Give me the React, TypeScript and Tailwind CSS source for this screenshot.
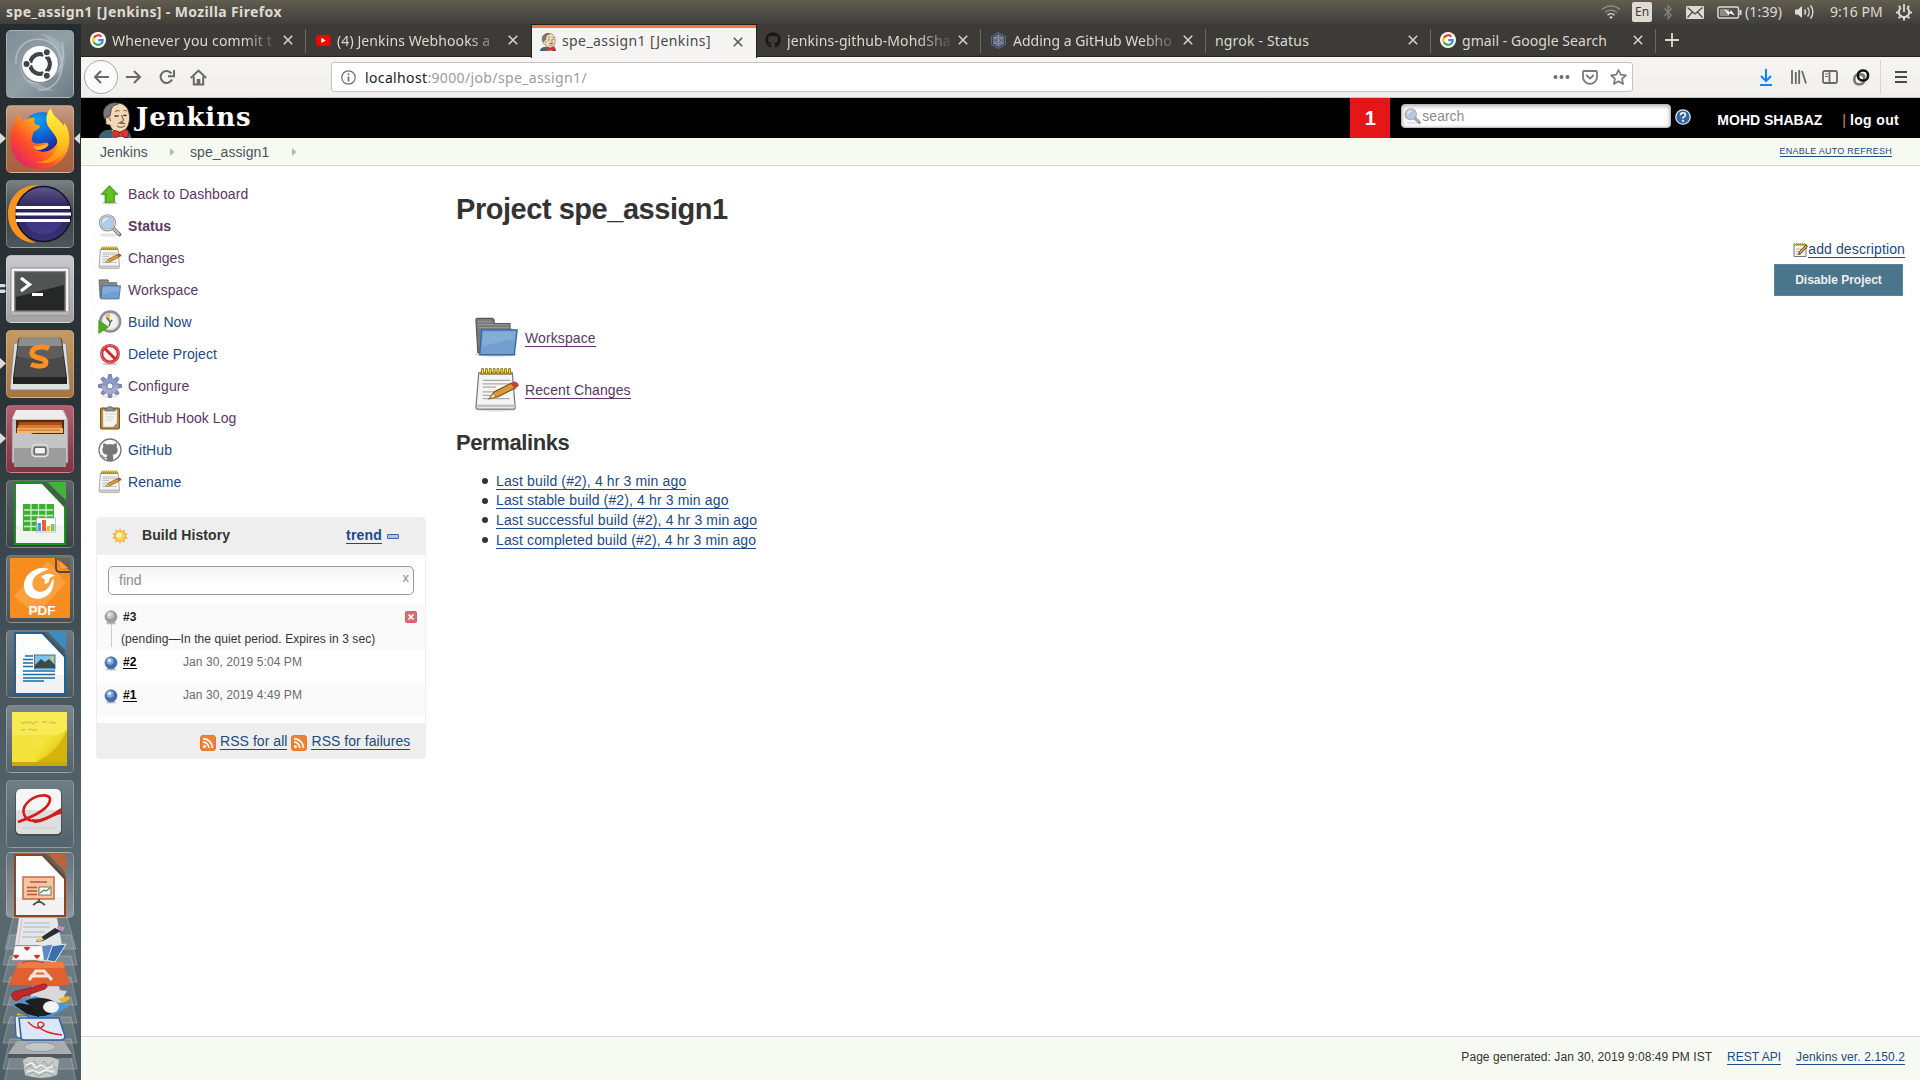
import React from 'react';
import type { ReactNode } from 'react';
import { FaGithub, FaBluetoothB } from 'react-icons/fa';

/* ---------- small shared drawings ---------- */

function GoogleG() {
  return (
    <svg width="16" height="16" viewBox="0 0 18 18" className="shrink-0">
      <circle cx="9" cy="9" r="9" fill="#fff" />
      <g fill="none" strokeWidth="2.5">
        <path d="M12.9 5.3A5.3 5.3 0 0 0 4.3 6.6" stroke="#ea4335" />
        <path d="M4.3 6.6a5.3 5.3 0 0 0 0 4.8" stroke="#fbbc05" />
        <path d="M4.3 11.4a5.3 5.3 0 0 0 8.2 1.7" stroke="#34a853" />
        <path d="M12.5 13.1A5.3 5.3 0 0 0 14.3 9.2H9.2" stroke="#4285f4" />
      </g>
    </svg>
  );
}

function YoutubeMark() {
  return (
    <svg width="16" height="16" viewBox="0 0 16 16" className="shrink-0">
      <rect x="1" y="3" width="14.5" height="11" rx="2.5" fill="#f00" />
      <path d="M6.3 5.8v5.2l4.400-2.600z" fill="#fff" />
    </svg>
  );
}

function Butler({ w, h }: { w: number; h: number }) {
  return (
    <svg width={w} height={h} viewBox="0 0 32 36" className="shrink-0">
      <path d="M0 36c0-4 3-7 8-8l8-1 10 1c4 1 6 4 6 8z" fill="#3f6478" />
      <path d="M13 28l6 3 5-4 1 9H14z" fill="#e9e9e9" />
      <path d="M7 20C4 8 10 1 18 1c8 0 13 6 12.500 16C30 25 26 30 20 30c-5 0-8-3-9-7-3 0-5-1-4-3z" fill="#f3d8b6" stroke="#3a2f28" strokeWidth=".8" />
      <path d="M6 18C1 9 7 1 16 .6c3 0 4 1 3 1.600-5 1-7 4-7 7 0 2-1 3-1 5-3 0-5 1-5 4z" fill="#7a787a" stroke="#231f20" strokeWidth=".6" />
      <path d="M8 16c2-1 3 0 3.500 3M16 9.500c1.500-1.200 3-1 4.500-.4M24.500 8.800c1.500-.6 2.500-.3 3.500.6M22.500 13c1 3 2.500 5 1.800 6s-1.800 1-2.800.6M18 24c3 2 6 1.500 8-.6" fill="none" stroke="#4a3d34" strokeWidth=".9" />
      <path d="M18 21.500c2.500-1.800 6-1.800 9 .5-3-.2-6 0-9-.5z" fill="#5e4a3c" />
      <path d="M15.500 13.500q2 1.500 4 0M24.500 13q1.500 1.300 3 0" fill="none" stroke="#231f20" strokeWidth="1.100" />
      <path d="M14 29c2-1 5 0 7 2 2-2 5-4 8-3 1 3 0 6-1 8l-6-2-7 2c-1-3-2-5-1-7z" fill="#e0352f" stroke="#5d1a18" strokeWidth=".7" />
      <circle cx="21.500" cy="32.500" r="1.800" fill="#ef4a45" stroke="#5d1a18" strokeWidth=".6" />
    </svg>
  );
}

function HexMark() {
  return (
    <svg width="17" height="17" viewBox="0 0 18 18" className="shrink-0" fill="none">
      <path d="M9 .8l7.300 4.100v8.200L9 17.200 1.700 13.100V4.900z" stroke="#5468a8" strokeWidth="1.200" />
      <path d="M9 3l5 3v6l-5 3-5-3V6z" fill="#59636e" stroke="#8f9cab" strokeWidth=".8" />
      <path d="M4 6l10 6M14 6L4 12M9 3v12M4 6h10M4 12h10" stroke="#a2aebb" strokeWidth=".6" />
    </svg>
  );
}

function CloseX({ dark }: { dark?: boolean }) {
  return (
    <svg width="10" height="10" viewBox="0 0 10 10" className="shrink-0" fill="none" stroke={dark ? '#5a5954' : '#d5d2c8'} strokeWidth="1.600">
      <path d="M.8.8l8.400 8.400M9.200.8L.8 9.200" />
    </svg>
  );
}

/* ---------- top panel ---------- */

function TopPanel() {
  return (
    <div className="flex h-6 items-center bg-linear-to-b from-[#615d50] via-[#504d47] to-[#403f3a] pl-1.5 text-[#dfdbd2]">
      <span className="text-[14px] leading-6 font-bold tracking-[0.38px] whitespace-nowrap">spe_assign1 [Jenkins] - Mozilla Firefox</span>
      <div className="ml-auto flex h-6 items-center">
        <svg width="20" height="16" viewBox="0 0 20 16" fill="none" strokeWidth="1.500">
          <path d="M1 5.500a13 13 0 0 1 18 0" stroke="#8e8b82" />
          <path d="M4 8.500a9 9 0 0 1 12 0" stroke="#8e8b82" />
          <path d="M6.500 11.200a5 5 0 0 1 7 0" stroke="#dfdbd2" />
          <path d="M8.300 13.200L10 15l1.700-1.800a2.400 2.400 0 0 0-3.400 0z" fill="#dfdbd2" />
        </svg>
        <span className="ml-[11px] flex h-5 w-5 items-center justify-center rounded-[2px] bg-[#dfdbd2] text-[12px] text-[#3c3b37]">En</span>
        <FaBluetoothB size={16} className="ml-2 text-[#85827a]" />
        <svg width="18" height="13" viewBox="0 0 18 13" className="ml-[10px]">
          <rect width="18" height="13" rx="1" fill="#dfdbd2" />
          <path d="M1.500 1.500L9 8l7.500-6.500M1.500 11.500L6.500 6M16.500 11.500l-5-5.500" fill="none" stroke="#4a4843" strokeWidth="1.200" />
        </svg>
        <svg width="25" height="13" viewBox="0 0 25 13" className="ml-[13px]">
          <rect x="1" y="1" width="20.500" height="11" rx="1.500" fill="none" stroke="#dfdbd2" strokeWidth="1.500" />
          <rect x="22.500" y="4" width="2" height="5" fill="#dfdbd2" />
          <rect x="3" y="3" width="9" height="7" fill="#8e8b82" />
          <path d="M7 3l6 3.200.8-2.200L18 9.500l-5.500-2.200-.8 1.900z" fill="#fff" />
        </svg>
        <span className="ml-[3px] w-[38px] text-[14px] leading-6 tracking-[0.14px]">(1:39)</span>
        <svg width="21" height="16" viewBox="0 0 21 16" className="ml-[11px]" fill="none" stroke="#dfdbd2" strokeWidth="1.400">
          <path d="M1 5.500h3l4-3.500v12l-4-3.500H1z" fill="#dfdbd2" stroke="none" />
          <path d="M10.500 5.500a4 4 0 0 1 0 5M13.500 3.500a7 7 0 0 1 0 9M16.500 1.500a10 10 0 0 1 0 13" />
        </svg>
        <span className="ml-[15px] w-[54px] text-[14px] leading-6 whitespace-nowrap">9:16 PM</span>
        <svg width="18" height="18" viewBox="0 0 18 18" className="mr-[7px] ml-[11px]" fill="none" stroke="#dfdbd2">
          <path d="M6 4.800a5.200 5.200 0 1 0 6 0" strokeWidth="2" />
          <path d="M9 1v8" strokeWidth="1.800" />
          <path d="M3.800 2.800l1.600 1.800M14.200 2.800l-1.600 1.800M1 9.500h2M15 9.500h2M3.500 15.200l1.500-1.500M14.500 15.200L13 13.700M9 15v2.500" strokeWidth="2" />
        </svg>
      </div>
    </div>
  );
}

/* ---------- launcher ---------- */

function Tile({ bg, last, arrow, both, children }: { bg: string; last?: boolean; arrow?: 'one' | 'two'; both?: boolean; children: ReactNode }) {
  return (
    <div className={`relative flex w-[81px] shrink-0 justify-center pr-[1px] ${last ? 'h-[62px]' : 'h-[75px]'}`}>
      {arrow === 'one' && (
        <svg width="6" height="11" viewBox="0 0 6 11" className="absolute top-[28px] left-0">
          <path d="M0 0l6 5.500L0 11z" fill="#dcdcdc" />
        </svg>
      )}
      {arrow === 'two' && (
        <svg width="6" height="11" viewBox="0 0 6 11" className="absolute top-[28px] left-0">
          <path d="M0 1h4.500L6 2.800 4.500 4.300H0zM0 6.500h4.500L6 8.200 4.500 10H0z" fill="#dcdcdc" />
        </svg>
      )}
      {both && (
        <svg width="6" height="11" viewBox="0 0 6 11" className="absolute top-[28px] right-[1px]">
          <path d="M6 0L0 5.500 6 11z" fill="#dcdcdc" />
        </svg>
      )}
      <div className={`w-[68px] overflow-hidden rounded-[5px] border border-white/25 ${last ? 'h-[66px]' : 'h-[68px]'} ${bg}`}>
        <svg width="66" height="66" viewBox="1 1 66 66">
          {children}
        </svg>
      </div>
    </div>
  );
}

function OfficeDoc({ dark, light }: { dark: string; light: string }) {
  return (
    <>
      <path d="M8 2h30l22 23v40H8z" fill={dark} />
      <path d="M10 4h26l22 23v36H10z" fill="#fdfdfd" />
      <path d="M10 45h48v18H10z" fill="#ececec" opacity=".7" />
      <path d="M40 2h20v18z" fill={light} />
      <path d="M36 3l23 25v-8L42 2h-6z" fill="#4a4a4a" opacity=".5" />
    </>
  );
}

function Launcher() {
  return (
    <div className="flex h-[1056px] w-[81px] shrink-0 flex-col overflow-hidden bg-[linear-gradient(180deg,#252c2f_0%,#2b3438_36%,#3b474d_50%,#4d5c64_68%,#5b6b72_80%,#4d5d64_100%)] pt-[6px]">
      <Tile bg="bg-linear-to-br from-[#7d8c94] via-[#93a1a7] to-[#6b7b83]">
        <path d="M10 34C8 8 38 2 50 18c14 18 2 44-18 42M56 12C64 40 38 62 22 50" fill="none" stroke="#c3cdd1" strokeWidth="1.500" opacity=".7" />
        <path d="M34 4c24 0 32 26 18 42 4-20-2-34-18-42zM14 30c-2 20 14 34 36 30-16-2-28-12-36-30z" fill="#b9c4c9" opacity=".45" />
        <circle cx="34" cy="35" r="18.500" fill="#4c5a60" opacity=".5" />
        <circle cx="34" cy="34" r="18" fill="#fff" />
        <circle cx="34" cy="34" r="9.800" fill="none" stroke="#3c4649" strokeWidth="4.200" />
        <path d="M34 34h-17M34 34l8-14M34 34l8 14" stroke="#fff" strokeWidth="2.200" />
        <circle cx="34" cy="34" r="7.600" fill="#fff" />
        <g fill="#3c4649" stroke="#fff" strokeWidth="1.400">
          <circle cx="20.500" cy="34" r="3.700" />
          <circle cx="40.800" cy="22.300" r="3.700" />
          <circle cx="40.800" cy="45.700" r="3.700" />
        </g>
      </Tile>

      <Tile bg="bg-linear-to-b from-[#c79d86] via-[#ad6d4c] to-[#a9603d]" arrow="one" both>
        <defs>
          <linearGradient id="ffBody" x1="1" y1="0" x2="0" y2="1">
            <stop offset="0" stopColor="#ffe94f" />
            <stop offset=".35" stopColor="#ffa81f" />
            <stop offset=".65" stopColor="#ff4b26" />
            <stop offset="1" stopColor="#d0128c" />
          </linearGradient>
          <radialGradient id="ffGlobe" cx=".4" cy=".2" r=".9">
            <stop offset="0" stopColor="#12a0f0" />
            <stop offset=".6" stopColor="#1150c8" />
            <stop offset="1" stopColor="#2b1470" />
          </radialGradient>
          <linearGradient id="ffTail" x1="0" y1="0" x2="0" y2="1">
            <stop offset="0" stopColor="#fff44f" />
            <stop offset=".6" stopColor="#ffc61f" />
            <stop offset="1" stopColor="#ff8a16" />
          </linearGradient>
        </defs>
        <circle cx="36" cy="27" r="20" fill="url(#ffGlobe)" />
        <path d="M10 13c1-2 2-4 3-4l3 8c3-3 8-5 13-4-1 2-1 4 0 6 1 1 4 1 5 2 0 3-5 4-7 7 0 3-2 5-1 8 4 5 11 1 16 2 1 3-4 7-11 7 9 5 20-1 22-13 2-9-5-16-9-21 6 1 16 9 19 19 3 20-12 34-29 34C15 64 2 50 5 32c0-7 3-14 5-19z" fill="url(#ffBody)" />
        <path d="M45 3c-5 5-6 12-3 18 4 7 13 12 8 24-4 9-13 12-20 12 18 5 33-8 33-28-1-6-3-9-5-11 0 2 0 3 0 5C55 14 46 12 45 3z" fill="url(#ffTail)" />
        <path d="M27 41c5 2 10-2 15-2 2 1-3 5-8 6-4 0-6-2-7-4z" fill="#ffb52b" />
      </Tile>

      <Tile bg="bg-linear-to-b from-[#7b8082] via-[#3d4548] to-[#4d5659]">
        <defs>
          <linearGradient id="ecl" x1="0" y1="0" x2="0" y2="1">
            <stop offset="0" stopColor="#5c588e" />
            <stop offset=".4" stopColor="#2c2255" />
            <stop offset="1" stopColor="#3b3278" />
          </linearGradient>
        </defs>
        <path d="M33 5C15 4 2 17 2 34s12 29 28 29C18 58 11 47 11 34S19 9 33 5z" fill="#f7941e" />
        <circle cx="37.500" cy="34" r="27.500" fill="url(#ecl)" stroke="#151024" strokeWidth="1.500" />
        <path d="M19 42a20 20 0 0 0 37 0z" fill="#4b439a" opacity=".6" />
        <path d="M10 27.500h54M9.500 34h55.500M10 40.500h54" stroke="#fff" strokeWidth="3" />
      </Tile>

      <Tile bg="bg-linear-to-b from-[#c9c9cd] to-[#a3a3a6]" arrow="two">
        <path d="M5 13h58v47H5z" fill="#f2f2f2" stroke="#8d8d8d" />
        <path d="M5 56h58v4H5z" fill="#b5b5b5" />
        <path d="M8 16h52v41H8z" fill="#8b8b8b" />
        <path d="M9.500 17.500h49v38h-49z" fill="#262827" />
        <path d="M10 18h48v12L10 42z" fill="#505452" />
        <path d="M15 23l8.500 6.500L15 36" fill="none" stroke="#fff" strokeWidth="3.200" />
        <path d="M26 39.500h11" stroke="#fff" strokeWidth="2.800" />
      </Tile>

      <Tile bg="bg-linear-to-b from-[#c59a65] to-[#a8743c]" arrow="one">
        <path d="M8 13L4 58q0 2 2 2h56q2 0 2-2l-4-45z" fill="#dedede" stroke="#8a8a8a" />
        <path d="M12 10L7 48v6h54v-6L56 10q-1-3-4-3H16q-3 0-4 3z" fill="#232323" />
        <path d="M13 9L8 47h52L55 9q-1-2-3-2H16q-2 0-3 2z" fill="#4a4a4a" />
        <path d="M13 9q1-2 3-2h36q2 0 3 2l1 7H12z" fill="#8d8d8d" />
        <path d="M12 16h44l2 10q-22 7-48 0z" fill="#6a6a6a" opacity=".6" />
        <path d="M43 18.500C38 16 26 16 26 23c0 6 14 4 14 9.500 0 5-10 4-15 2" fill="none" stroke="#ff8f1f" strokeWidth="5" />
      </Tile>

      <Tile bg="bg-linear-to-b from-[#b5606f] to-[#83303f]" arrow="one">
        <path d="M12 5h46l4 10v43H6V15z" fill="#c4c4c4" stroke="#777" strokeWidth=".6" />
        <path d="M10 5h46l5 9H6z" fill="#ededed" />
        <path d="M10 15h48v16H10z" fill="#4b2c18" />
        <path d="M13 17h43v3H13z" fill="#a84e1a" />
        <path d="M12 20h44v3H12z" fill="#dd7a2c" />
        <path d="M11 23h46v5H11z" fill="#f2b46b" />
        <path d="M12 25h42" stroke="#c46b22" strokeWidth="1" />
        <path d="M8 28h16l3 1h33v33H8z" fill="#9c9c9c" />
        <path d="M8 28h16l3 1h33v14H8z" fill="#c4c4c4" />
        <rect x="26" y="40" width="16" height="11.500" rx="3.500" fill="#8f8f8f" stroke="#e5e5e5" strokeWidth="1.500" />
        <rect x="28.500" y="42.500" width="11" height="6.500" rx="1" fill="#f4f4f4" stroke="#666" strokeWidth="1.200" />
      </Tile>

      <Tile bg="bg-linear-to-b from-[#5d6467] to-[#3a4447]">
        <OfficeDoc dark="#18921a" light="#43b13e" />
        <rect x="17" y="24" width="31" height="27" fill="#3fae35" />
        <path d="M18 30h29M18 35.500h29M18 41h29M18 46.500h29M25 24v27M32.500 24v27M40 24v27" stroke="#c9f0c2" strokeWidth="1.300" />
        <rect x="30.500" y="38" width="19" height="14" fill="#fff" stroke="#999" strokeWidth=".6" />
        <path d="M31.500 43h3.500v8h-3.500z" fill="#4d96d9" />
        <path d="M36 40h4v11h-4z" fill="#e06437" />
        <path d="M40.700 46h3.600v5h-3.600z" fill="#f1b52c" />
        <path d="M45 44h3.600v7H45z" fill="#7bc963" />
      </Tile>

      <Tile bg="bg-linear-to-b from-[#6b7275] to-[#46525a]">
        <rect x="4" y="3" width="60" height="60" fill="#f78d1e" />
        <path d="M8 41l34-35 18 22-30 32z" fill="#ffb768" opacity=".45" />
        <path d="M50 3h14v13z" fill="#6b6255" />
        <path d="M50 3v10q0 4 4 4h10" fill="none" stroke="#4b4a48" strokeWidth="1.800" />
        <path d="M54 6v7h8z" fill="#ff9e3d" />
        <path d="M43 14C31 10 17 19 18 32c1 13 20 17 28 3 2-5 2-9 1-12-2 6-5 13-12 14-7 0-10-6-8-12 2-5 8-8 16-11z" fill="#fff" />
        <path d="M35 22c5-4 10-4 14-1-3 0-5 1-6 4 1 2-3 5-5 3 2-2 1-4-3-6z" fill="#fff" />
        <text x="36" y="59.500" textAnchor="middle" fontFamily="Liberation Sans" fontWeight="bold" fontSize="13.500" fill="#fff">PDF</text>
      </Tile>

      <Tile bg="bg-linear-to-b from-[#6d777d] to-[#4b5961]">
        <OfficeDoc dark="#1a6496" light="#3b8cc0" />
        <path d="M19 26h8M17 29.500h10M17 33h10M17 36.500h10M17 41h32M17 44.500h32M17 48h32M17 51h21" stroke="#1a6ca5" strokeWidth="1.500" />
        <rect x="28.500" y="25" width="20.500" height="14" fill="#7ec3ee" stroke="#38566b" strokeWidth=".8" />
        <path d="M29 35l6-6 4 3 4-3 6 6v3H29z" fill="#3e4a43" />
        <circle cx="46" cy="28" r="1.800" fill="#f4c83a" />
      </Tile>

      <Tile bg="bg-linear-to-b from-[#7b8489] to-[#56636a]">
        <defs>
          <linearGradient id="noteCurl" x1="0" y1="0" x2="1" y2="1">
            <stop offset="0" stopColor="#f9ee60" />
            <stop offset=".45" stopColor="#f1dd2c" />
            <stop offset="1" stopColor="#cbab06" />
          </linearGradient>
        </defs>
        <path d="M6 7h55v54H6z" fill="#f8ea52" />
        <path d="M6 30h55v28H6z" fill="#f2dc30" opacity=".6" />
        <path d="M6 57h55v4H6z" fill="#c9a90f" />
        <path d="M61 25L30 57h31z" fill="#d4b50c" />
        <path d="M30 57V40c0-4 3-6 7-7 10-1 17-3 24-9C57 37 46 50 30 57z" fill="url(#noteCurl)" />
        <path d="M15 18q1-2 2 0t2-.5 2 .5h2q2-2 3 0t3-.5 3 .3M36 17h5M43 18q1-2 3-.5t4 0M15 25h4M22 25q2-2 4 0h5" fill="none" stroke="#a69c4a" strokeWidth=".7" />
      </Tile>

      <Tile bg="bg-linear-to-b from-[#6f7c83] to-[#53636b]">
        <rect x="9" y="10" width="47" height="46" rx="5" fill="#39444a" opacity=".7" />
        <rect x="10" y="9" width="45" height="45" rx="5" fill="#f6f6f6" />
        <path d="M10 30h45v19q0 5-5 5H15q-5 0-5-5z" fill="#dedede" />
        <path d="M17 48h32" stroke="#c5c5c5" strokeWidth=".8" />
        <path d="M12 42C26 37 43 29 44 20 45 13 29 14 21 23c-7 8-3 18 8 18 10 0 17-6 26-10" fill="none" stroke="#d61b1b" strokeWidth="2.600" />
        <path d="M26 39c10 3 19-5 29-11v6c-10 2-17 9-27 9z" fill="#d61b1b" />
      </Tile>

      <Tile bg="mt-[-3px] bg-linear-to-b from-[#69757b] to-[#8c979c]" last>
        <OfficeDoc dark="#8e441f" light="#b8653b" />
        <rect x="17" y="25" width="31" height="22" fill="#f7c5a4" stroke="#c86b3c" strokeWidth="1.500" />
        <path d="M24 30h17M21 35.500h10M21 39h10M21 42.500h10" stroke="#b85a2e" strokeWidth="1.600" />
        <rect x="33" y="35" width="12" height="8" fill="#fff" stroke="#555" strokeWidth=".8" />
        <path d="M34 41l4-3 2 1 4-3" fill="none" stroke="#3a9e3e" strokeWidth="1.300" />
        <path d="M33 47v3M33 49l-6 4M33 49l6 4" stroke="#555" strokeWidth="2" />
      </Tile>
      <FoldedIcons />
    </div>
  );
}

function FoldedIcons() {
  return (
    <svg width="81" height="166" viewBox="0 0 81 166" className="relative shrink-0">
      <g fill="#c7d2d6" fillOpacity=".2" stroke="#dfe7ea" strokeOpacity=".3" strokeWidth="1">
        <path d="M13 0h54l9 32H5z" />
        <path d="M10 18h61l6 30H3z" />
        <path d="M10 39h61l6 26H3z" />
        <path d="M10 60h61l6 28H3z" />
        <path d="M10 80h61l6 26H3z" />
        <path d="M10 100h61l6 26H3z" />
        <path d="M10 122h61l6 30H3z" />
        <path d="M10 140h61l6 30H3z" />
      </g>
      {/* note page and pencil */}
      <path d="M19 1h38l5 27H15z" fill="#e3e7ea" />
      <path d="M24 6h25M23 10h27M23 15h22M22 20h20" stroke="#aab4bd" strokeWidth="1" />
      <path d="M22 2l-4 26" stroke="#e6a6a6" strokeWidth=".8" />
      <path d="M37 23l18-12 6 3-18 10-7 1z" fill="#2d2d2d" />
      <path d="M41 19l-5 6 8-2z" fill="#f0d36a" />
      <path d="M57 9l8 1-2 4-5-1z" fill="#c98bc4" />
      {/* playing cards */}
      <path d="M50 29l16-2-11 18-10-2z" fill="#3c6fae" stroke="#e5ecf5" />
      <path d="M39 29l14-2-6 17-10-1z" fill="#5b8ac4" stroke="#e5ecf5" />
      <path d="M15 29h27l2 14H12z" fill="#fafafa" stroke="#bbb" strokeWidth=".5" />
      <path d="M27 34l-3-3q0-2 3-1 3-1 3 1zM16 42l-3-3q1-2 3-1 3-1 3 1zM37 42l-3-3q1-2 3-1 3-1 3 1z" fill="#d42a2a" />
      {/* software centre bag */}
      <path d="M18 45h45l7 23H9z" fill="#e0602f" />
      <path d="M18 45h45l2 6H17z" fill="#ef7b46" />
      <path d="M22 46q10-4 22 0" fill="none" stroke="#c84a1e" />
      <path d="M29 63l7-9h8l8 9M30 59h20" fill="none" stroke="#fbe4da" strokeWidth="3" />
      {/* gear and wrench */}
      <path d="M32 69h27l1 4 7 1-3 5 3 5-7 2-2 4H34l-4-5z" fill="#d9d9d9" stroke="#9b9b9b" strokeWidth=".6" />
      <path d="M12 80c-1-5 4-6 10-7l22-6c4 0 4 3 1 5L22 80c-3 4-8 5-10 0z" fill="#c0282d" stroke="#7c1519" strokeWidth=".7" />
      {/* diving bird */}
      <path d="M11 88l24-9 35 10-29 16z" fill="#4c97de" />
      <path d="M14 88c6-4 12 0 17 0l13 4-5 8-12-3z" fill="#1b1b1b" />
      <path d="M25 84c6-3 16-4 23-2 10 2 11 10 4 14-6 4-13 4-16 1-4-4 0-5-4-7z" fill="#1f1f1f" />
      <ellipse cx="51" cy="90" rx="8" ry="6" fill="#f2f2f2" />
      <path d="M17 96l12 4-3 3-9-3zM58 82l10-3 2 3-7 4z" fill="#e6b822" />
      {/* document stack with a red curve */}
      <path d="M15 101q0-2 3-2h10l3 22H20q-4 0-4-3z" fill="#e6eef8" stroke="#2f62a8" strokeWidth="1.200" />
      <path d="M19 101h40l6 18q0 4-4 4H24q-3 0-3-3z" fill="#dbe7f6" stroke="#2f62a8" strokeWidth="1.600" />
      <path d="M28 105c8 8 13 7 16 3 0-4-8-4-6 1 5 6 14 8 24 9" fill="none" stroke="#dd2222" strokeWidth="1.400" />
      {/* disk */}
      <path d="M17 124h47l8 13v4H8v-4z" fill="#a9adaf" />
      <ellipse cx="40" cy="130" rx="16" ry="4.500" fill="#c2c6c8" stroke="#8f9394" strokeWidth=".8" />
      <path d="M8 137h64v4H8z" fill="#54585a" />
      {/* shredder paper */}
      <path d="M23 143l5-3h23l8 3-2 15q-16 6-32 0z" fill="#c3cac7" />
      <path d="M25 145l5 4 4-5 5 6 5-6 4 5 6-5M25 152l5-3 5 4 6-4 6 4 6-4 4 3M27 158l6-3 6 4 7-4 8 3" fill="none" stroke="#9aa39f" strokeWidth="1" />
      <path d="M26 148l6-2 4 5 5-3 6 4 6-3M27 155l6-2 6 3 7-3 8 2" fill="none" stroke="#f2f4f3" strokeWidth="1.500" />
    </svg>
  );
}

/* ---------- browser chrome ---------- */

function Tab({ icon, label, tracking, active, sep, fade }: { icon?: ReactNode; label: string; tracking: string; active?: boolean; sep?: boolean; fade?: boolean }) {
  if (active) {
    return (
      <div className="z-10 -mr-px flex h-[34px] w-[226px] shrink-0 items-center border-x border-t border-[#23221f] bg-[#f5f4f2] pr-[13px] pl-2 shadow-[inset_0_3px_0_#f07746]">
        {icon}
        <span className={`ml-[6px] flex-1 pb-px text-[14px] leading-8 whitespace-nowrap text-[#4a4a48] ${tracking}`}>{label}</span>
        <CloseX dark />
      </div>
    );
  }
  return (
    <div className="relative flex h-[33px] w-[225px] shrink-0 items-center border-b border-[#23221f] pr-[13px] pl-[9px]">
      {icon && <span className="mr-1.5 flex">{icon}</span>}
      <span className={`mr-[3px] min-w-0 flex-1 pt-px text-[14px] leading-8 whitespace-nowrap text-[#dcd9cf] ${tracking} ${fade ? 'mask-r-from-78% mask-r-to-100%' : ''}`}>{label}</span>
      <CloseX />
      {sep && <span className="absolute top-[5px] right-0 h-6 w-px bg-[#6c6a63]" />}
    </div>
  );
}

function TabStrip() {
  return (
    <div className="flex h-[33px] bg-[#3c3b37] shadow-[inset_0_-1px_0_#23221f]">
      <Tab icon={<GoogleG />} label="Whenever you commit t" tracking="tracking-[0.15px]" sep fade />
      <Tab icon={<YoutubeMark />} label="(4) Jenkins Webhooks a" tracking="tracking-[0.1px]" fade />
      <Tab icon={<Butler w={16} h={18} />} label="spe_assign1 [Jenkins]" tracking="tracking-[0.4px]" active />
      <Tab icon={<FaGithub size={16} color="#191717" />} label="jenkins-github-MohdSha" tracking="tracking-[0.1px]" sep fade />
      <Tab icon={<HexMark />} label="Adding a GitHub Webho" tracking="tracking-[0px]" sep fade />
      <Tab label="ngrok - Status" tracking="tracking-[0.18px]" sep />
      <Tab icon={<GoogleG />} label="gmail - Google Search" tracking="tracking-[0.06px]" sep />
      <svg width="14" height="14" viewBox="0 0 14 14" className="mt-[9px] ml-[9px]" stroke="#dcd9cf" strokeWidth="1.800">
        <path d="M7 0v14M0 7h14" />
      </svg>
    </div>
  );
}

function Toolbar() {
  return (
    <div className="flex h-[41px] items-center border-b border-[#c4c3c0] bg-linear-to-b from-[#f6f5f4] to-[#f0efed]">
      <div className="ml-[3px] flex h-[34px] w-[34px] items-center justify-center rounded-full border border-[#a9a8a5] bg-[#fbfbfb]">
        <svg width="16" height="14" viewBox="0 0 16 14" fill="none" stroke="#6a6966" strokeWidth="2">
          <path d="M16 7H2M8 1L2 7l6 6" />
        </svg>
      </div>
      <svg width="16" height="14" viewBox="0 0 16 14" className="ml-2" fill="none" stroke="#6a6966" strokeWidth="2">
        <path d="M0 7h14M8 1l6 6-6 6" />
      </svg>
      <svg width="16" height="16" viewBox="0 0 16 16" className="ml-[17px]" fill="none" stroke="#6a6966" strokeWidth="2">
        <path d="M13 10.500A6 6 0 1 1 12.500 4.500" />
        <path d="M15 1v6.200H9" />
      </svg>
      <svg width="17" height="17" viewBox="0 0 17 17" className="ml-[15px]" fill="none" stroke="#6a6966" strokeWidth="2">
        <path d="M.8 9L8.500 1.600 16.200 9" />
        <path d="M3.800 7.500V15.500h9.400V7.500" />
        <path d="M8.500 15.500V10" strokeWidth="3.600" />
      </svg>

      <div className="ml-[124px] flex h-[30px] w-[1302px] items-center rounded-[3px] border border-[#c5c4c0] bg-white">
        <svg width="15" height="15" viewBox="0 0 15 15" className="ml-[9px]" fill="none" stroke="#6d6d6d" strokeWidth="1.200">
          <circle cx="7.500" cy="7.500" r="6.700" />
          <path d="M7.500 6.500v5M7.500 3.500v1.800" strokeWidth="1.700" />
        </svg>
        <span className="ml-[9px] pt-px text-[14px] leading-7 tracking-[0.36px] text-[#9b9b9b]">
          <span className="text-[#222]">localhost</span>:9000/job/spe_assign1/
        </span>
        <svg width="17" height="6" viewBox="0 0 17 6" className="ml-auto" fill="#6d6d6d">
          <circle cx="2.500" cy="3" r="2" />
          <circle cx="8.500" cy="3" r="2" />
          <circle cx="14.500" cy="3" r="2" />
        </svg>
        <svg width="16" height="15" viewBox="0 0 16 15" className="ml-3" fill="none" stroke="#7a7a7a" strokeWidth="1.800" strokeLinejoin="round" strokeLinecap="round">
          <path d="M1 2q0-1 1-1h12q1 0 1 1v5a7 6.800 0 0 1-14 0z" />
          <path d="M4.800 5.500L8 8.700l3.200-3.200" />
        </svg>
        <svg width="17" height="16" viewBox="0 0 17 16" className="mr-[5px] ml-3" fill="none" stroke="#7a7a7a" strokeWidth="1.700" strokeLinejoin="round">
          <path d="M8.500 1l2.200 4.700 5.200.6-3.900 3.500 1.100 5.100-4.600-2.600-4.600 2.600L5 9.800 1.100 6.300l5.200-.6z" />
        </svg>
      </div>

      <svg width="14" height="17" viewBox="0 0 14 17" className="ml-[126px]" fill="none" stroke="#0a84ff" strokeWidth="2">
        <path d="M7 0v12M2 7l5 5 5-5M1 16h12" />
      </svg>
      <svg width="16" height="14" viewBox="0 0 16 14" className="ml-[18px]" fill="none" stroke="#6a6966" strokeWidth="1.800">
        <path d="M1 0v14M4.800 2v12M8.200 0v14M11 1l4 12.500" />
      </svg>
      <svg width="16" height="14" viewBox="0 0 16 14" className="ml-[15px]" fill="none" stroke="#6a6966" strokeWidth="1.800">
        <rect x="1" y="1" width="14" height="12" rx="1.500" />
        <path d="M7.500 1v12" />
        <path d="M3 4h3M3 6.500h3" strokeWidth="1" />
      </svg>
      <svg width="18" height="17" viewBox="0 0 18 17" className="ml-[14px]" fill="none" strokeWidth="2.600">
        <rect x="2.300" y="5.300" width="10" height="10" rx="4.500" stroke="#777" />
        <rect x="6" y="1.500" width="10" height="10" rx="4.500" stroke="#111" />
        <path d="M7 5.300h1.500q3.800 0 3.800 3.500" stroke="#777" />
      </svg>
      <span className="ml-[10px] h-[34px] w-px bg-[#d5d4d1]" />
      <svg width="12" height="12" viewBox="0 0 12 12" className="ml-[14px]" stroke="#4a4a48" strokeWidth="2">
        <path d="M0 1h12M0 6h12M0 11h12" />
      </svg>
    </div>
  );
}

/* ---------- page header ---------- */

function Lens({ size, className }: { size: number; className?: string }) {
  return (
    <svg width={size} height={size} viewBox="0 0 24 24" className={`shrink-0 ${className ?? ''}`}>
      <ellipse cx="11" cy="21" rx="9" ry="1.800" fill="#d8d8d8" opacity=".7" />
      <path d="M15 14l6.500 6.500" stroke="#6e6e6e" strokeWidth="3.800" strokeLinecap="round" />
      <path d="M15.500 14.500l5.500 5.500" stroke="#c6c6c6" strokeWidth="1.800" strokeLinecap="round" />
      <circle cx="9.500" cy="8.800" r="7.500" fill="#aecbed" stroke="#8f8f8f" strokeWidth="2.200" />
      <circle cx="9.500" cy="8.800" r="7.200" fill="none" stroke="#e8e8e8" strokeWidth="1" />
      <path d="M5 8.500q1-4 5-4.200" fill="none" stroke="#e8f2fd" strokeWidth="1.800" />
    </svg>
  );
}

function JenkinsHeader() {
  return (
    <div className="flex h-10 bg-black text-white">
      <div className="flex w-[180px] pl-[18px]">
        <span className="mt-1">
          <Butler w={32} h={36} />
        </span>
        <span className="ml-[5px] font-['DejaVu_Serif'] text-[26px] leading-[38px] font-bold tracking-[0.9px]">Jenkins</span>
      </div>
      <div className="ml-auto flex h-10 w-10 items-center justify-center bg-[#e31717] text-[20px] font-bold">1</div>
      <div className="mt-1.5 ml-[11px] flex h-6 w-[270px] items-center rounded-[4px] border border-[#bbb] bg-white pl-0.5 text-[14px] text-[#8b8b8b] shadow-[inset_0_1px_4px_#aaa]">
        <Lens size={17} />
        <span className="ml-px leading-5">search</span>
      </div>
      <svg width="16" height="16" viewBox="0 0 16 16" className="mt-[11px] ml-1">
        <circle cx="8" cy="8" r="7.200" fill="#3465a4" stroke="#dbe6f3" strokeWidth="1.300" />
        <path d="M5.500 6.200Q5.700 3.800 8 3.800t2.400 2.100Q10.400 7.300 8 8.600v1" fill="none" stroke="#fff" strokeWidth="1.600" />
        <circle cx="8" cy="11.800" r="1.100" fill="#fff" />
      </svg>
      <span className="mt-[11px] ml-[26px] w-[106px] text-[14px] leading-[22px] font-bold whitespace-nowrap">MOHD SHABAZ</span>
      <span className="mt-[11px] ml-[19px] text-[14px] leading-[22px] text-[#e08a5a]">|</span>
      <span className="mt-[11px] mr-[20px] ml-1 w-[50px] text-[14px] leading-[22px] font-bold tracking-[0.34px] whitespace-nowrap">log out</span>
    </div>
  );
}

function Chevron() {
  return (
    <svg width="5" height="8" viewBox="0 0 5 8">
      <path d="M0 0l4.500 4L0 8z" fill="#b5b8b3" />
    </svg>
  );
}

function Breadcrumbs() {
  return (
    <div className="flex h-7 items-center border-b border-[#d3d7cf] bg-[#f6faf2] pt-px pl-[19px] text-[14px] tracking-[0.06px] text-[#4d545d]">
      <span className="w-[70px]">Jenkins</span>
      <Chevron />
      <span className="ml-[15px] w-[102px]">spe_assign1</span>
      <Chevron />
      <span className="mr-7 ml-auto border-b border-[#204a87] text-[9px] leading-[9px] tracking-[0.24px] text-[#204a87]">ENABLE AUTO REFRESH</span>
    </div>
  );
}

/* ---------- side panel icons ---------- */

function Notepad({ size }: { size: number }) {
  return (
    <svg width={size} height={size} viewBox="0 0 48 48" className="shrink-0">
      <ellipse cx="23" cy="44.500" rx="20" ry="2" fill="#bbb" opacity=".5" />
      <path d="M5 6h35l3 36q0 2-2 2H4q-2 0-2-2z" fill="#f4f4f2" stroke="#77797a" strokeWidth="1.300" />
      <path d="M3 39h40v3H3z" fill="#c1c1c1" />
      <path d="M6 5h34v3H6z" fill="#8a8a80" />
      <path d="M9 14h29M9 17.500h29M9 21h14M9 26h24M9 29.500h18M9 33h28" stroke="#ababab" strokeWidth="1.300" />
      <path d="M9 2.500v4M13 2.500v4M17 2.500v4M21 2.500v4M25 2.500v4M29 2.500v4M33 2.500v4M37 2.500v4" stroke="#8a6d00" strokeWidth="3" strokeLinecap="round" />
      <path d="M9 2.500v4M13 2.500v4M17 2.500v4M21 2.500v4M25 2.500v4M29 2.500v4M33 2.500v4M37 2.500v4" stroke="#edd430" strokeWidth="1.400" strokeLinecap="round" />
      <path d="M16 33l5-7 18-9 4 5-18 9z" fill="#d99a37" stroke="#7a4e10" strokeWidth="1.200" />
      <path d="M16 33l4-5.500 3 4z" fill="#f5dfb5" stroke="#7a4e10" strokeWidth=".6" />
      <path d="M39 17l3-1.500q4 .5 4.500 4L43 22z" fill="#e0352b" stroke="#8d5a54" strokeWidth=".8" />
    </svg>
  );
}

function NotepadSmall() {
  return (
    <svg width="15" height="16" viewBox="0 0 15 16" className="shrink-0">
      <path d="M1 2.500h12v12H1z" fill="#f3f3f1" stroke="#777" />
      <path d="M3 7h7M3 9.500h5M3 12h4" stroke="#b5b5b5" />
      <path d="M1.500 1v3M3.500 1v3M5.500 1v3M7.500 1v3M9.500 1v3M11.500 1v3" stroke="#c9a400" strokeWidth="1.400" />
      <path d="M5.500 12.500l1-3L13 2.800l1.600 1.500L8 11.500z" fill="#d9a548" stroke="#4e3a16" strokeWidth=".9" />
    </svg>
  );
}

function Folder({ size }: { size: number }) {
  return (
    <svg width={size} height={size} viewBox="0 0 48 48" className="shrink-0">
      <ellipse cx="23" cy="41" rx="22" ry="2.500" fill="#bbb" opacity=".6" />
      <path d="M2 5q0-1.500 1.500-1.500h16L21 5v4h16.500v6h2v24H4z" fill="#7b7b7b" stroke="#555" strokeWidth="1.200" />
      <path d="M4 7h15M4 10h33M5 13h32" stroke="#a2a2a2" strokeWidth=".8" />
      <path d="M8 15.500h37l-3 26H6z" fill="#729fcf" stroke="#3566a5" strokeWidth="1.400" />
      <path d="M9.500 17.500h34l-1 8q-14 1-34 8z" fill="#8fb5dd" opacity=".6" />
    </svg>
  );
}

const gearTeeth = [0, 45, 90, 135, 180, 225, 270, 315];

const sideItems: { label: string; visited: boolean; bold?: boolean; icon: ReactNode }[] = [
  {
    label: 'Back to Dashboard',
    visited: true,
    icon: (
      <svg width="24" height="24" viewBox="0 0 24 24">
        <ellipse cx="12" cy="21" rx="8" ry="1.500" fill="#ccc" />
        <path d="M11.500 3.500L20 12.500h-3.500v8H7v-8H3z" fill="#4fae18" stroke="#4a9a1e" strokeWidth=".8" />
        <path d="M11.500 5l5.500 6h-2v8.500H9V11H6z" fill="#83d633" opacity=".45" />
      </svg>
    ),
  },
  { label: 'Status', visited: true, bold: true, icon: <Lens size={24} /> },
  { label: 'Changes', visited: true, icon: <Notepad size={24} /> },
  { label: 'Workspace', visited: true, icon: <Folder size={24} /> },
  {
    label: 'Build Now',
    visited: false,
    icon: (
      <svg width="24" height="24" viewBox="0 0 24 24">
        <circle cx="12.200" cy="11.500" r="10" fill="#f0f0ec" stroke="#8a8aa0" strokeWidth="2.400" />
        <circle cx="12.200" cy="11.500" r="8" fill="none" stroke="#c9c9c4" strokeWidth=".8" />
        <path d="M12.200 11.500L6.500 5q3-2 5.500-1.500z" fill="#e3cb66" />
        <path d="M12.200 12L8.500 7.500M12.200 12l2-2M12.200 12l-1 4" stroke="#555" strokeWidth="1.200" />
        <path d="M.8 10.500L10.500 17 .8 23.500z" fill="#4fae18" stroke="#4a9a1e" strokeWidth=".8" />
      </svg>
    ),
  },
  {
    label: 'Delete Project',
    visited: false,
    icon: (
      <svg width="24" height="24" viewBox="0 0 24 24">
        <ellipse cx="12" cy="22" rx="8" ry="1.300" fill="#ccc" />
        <circle cx="12" cy="11.800" r="8.300" fill="#fbf7f7" stroke="#cf2b2b" strokeWidth="3.200" />
        <path d="M6.500 6.300l11 11" stroke="#cf2b2b" strokeWidth="3" />
        <circle cx="12" cy="11.800" r="8.600" fill="none" stroke="#ea7474" strokeWidth="1" />
      </svg>
    ),
  },
  {
    label: 'Configure',
    visited: true,
    icon: (
      <svg width="24" height="24" viewBox="0 0 24 24">
        <ellipse cx="12" cy="22.500" rx="8" ry="1.200" fill="#ddd" />
        {gearTeeth.map((a) => (
          <path key={a} d="M9.800 5l.8-4.500h2.800l.8 4.500z" transform={`rotate(${a} 12 12)`} fill="#8490b8" stroke="#6571a0" strokeWidth=".8" />
        ))}
        <circle cx="12" cy="12" r="8" fill="#8f9bc4" />
        <path d="M4 12a8 8 0 0 0 16 0z" fill="#a9a8d2" />
        <circle cx="12" cy="12" r="3.200" fill="#fff" stroke="#6571a0" strokeWidth="1" />
      </svg>
    ),
  },
  {
    label: 'GitHub Hook Log',
    visited: true,
    icon: (
      <svg width="24" height="24" viewBox="0 0 24 24">
        <rect x="2.500" y="2" width="19" height="21" rx="1" fill="#b8822f" stroke="#7d5414" />
        <path d="M5 4h14v17H5z" fill="#f3f3f1" stroke="#b8b5ad" strokeWidth=".5" />
        <path d="M7.500 8h10M7.500 11h9M7.500 14h7" stroke="#d5d5d3" strokeWidth="1" />
        <path d="M19 17l-4 4h4z" fill="#8c8c86" />
        <path d="M7 5V2.500h2L10.500.7h3L15 2.500h2V5z" fill="#8d918c" stroke="#5d615c" strokeWidth=".7" />
      </svg>
    ),
  },
  {
    label: 'GitHub',
    visited: false,
    icon: (
      <svg width="24" height="24" viewBox="0 0 24 24">
        <circle cx="12" cy="12" r="11" fill="#fff" stroke="#777" strokeWidth="1.300" />
        <path d="M5.500 5l3.500 1.500q3-.8 6 0L18.500 5q.8 2 .2 4 1.300 1.500 1 3.500-.5 4-5.200 4.300.8 1 .8 2.500v3.200q-3.200 1.200-6.600 0V20q-3 .4-4-1.500-.6-1-1.500-1.600 1.500-.2 2.500 1.400 1 1.300 3 .7 0-1.300.8-2.200-4.700-.3-5.200-4.300-.3-2 1-3.500-.6-2 .2-4z" fill="#777" />
      </svg>
    ),
  },
  { label: 'Rename', visited: false, icon: <Notepad size={24} /> },
];

/* ---------- build history ---------- */

function Ball({ kind }: { kind: 'grey' | 'blue' }) {
  return (
    <svg width="14" height="15" viewBox="0 0 14 15" className="shrink-0">
      <ellipse cx="7" cy="13.200" rx="5" ry="1.200" fill="#bbb" />
      <circle cx="7" cy="6.800" r="6" fill={kind === 'grey' ? '#9c9c9c' : '#3f6fb0'} stroke={kind === 'grey' ? '#8a8a8a' : '#2f568f'} strokeWidth=".6" />
      <circle cx="6" cy="5.200" r="3.600" fill={kind === 'grey' ? '#c4c4c4' : '#86a8d6'} />
      <circle cx="5.500" cy="4.600" r="1.800" fill={kind === 'grey' ? '#e2e2e2' : '#dbe7f5'} />
    </svg>
  );
}

function RssIcon() {
  return (
    <svg width="16" height="16" viewBox="0 0 16 16" className="shrink-0">
      <rect x=".5" y=".5" width="15" height="15" rx="2.500" fill="#ee8133" stroke="#e37a30" />
      <circle cx="4.500" cy="11.600" r="1.500" fill="#fff" />
      <path d="M3 7.200a5.800 5.800 0 0 1 5.800 5.800M3 3.600a9.400 9.400 0 0 1 9.400 9.400" fill="none" stroke="#fff" strokeWidth="1.700" />
    </svg>
  );
}

function BuildHistory() {
  return (
    <div className="mt-[19px] ml-[-2px] h-[242px] w-[330px] overflow-hidden rounded-[4px] border border-[#eee] bg-white">
      <div className="flex h-[37px] items-center bg-[#eee] pb-[2px] font-bold tracking-[0.07px]">
        <svg width="16" height="16" viewBox="0 0 16 16" className="ml-[15px]">
          <path d="M8 0l1.500 3L12.800 1.500 12.600 5 16 5.500 13.500 8l2.500 2.500-3.400.5.2 3.500L9.500 13 8 16l-1.500-3-3.300 1.500.2-3.500L0 10.500 2.500 8 0 5.500 3.400 5l-.2-3.500L6.500 3z" fill="#f6b04f" />
          <circle cx="8" cy="8" r="5" fill="#f8d95c" stroke="#f0a637" strokeWidth=".6" />
          <circle cx="7" cy="7" r="2.600" fill="#fdf3b4" />
        </svg>
        <span className="-mt-0.5 ml-[14px]">Build History</span>
        <span className="ml-[116px] h-[17px] border-b border-[#204a87] leading-4 tracking-[0.2px] text-[#204a87]">trend</span>
        <span className="mt-0.5 ml-[5px] h-[5px] w-3 rounded-[1px] border border-[#3566a5] bg-[#a9c6e6]" />
      </div>
      <div className="mt-[11px] ml-[11px] flex h-[29px] w-[306px] justify-between rounded-[5px] border border-[#999] bg-linear-to-b from-[#f3f3f3] to-white to-60% pr-1 pl-[10px] text-[#8b8b8b]">
        <span className="leading-[27px]">find</span>
        <span className="text-[13px] leading-[21px]">x</span>
      </div>
      <div className="mt-[9px] flex h-[46px] bg-[#fafafa] pl-[7px]">
        <div className="flex w-[15px] flex-col items-center pt-[6px] pr-px">
          <Ball kind="grey" />
          <span className="-mt-px h-[23px] w-px bg-[#ccc]" />
        </div>
        <div className="flex-1 text-[12px]">
          <div className="mt-1 flex h-[18px] items-center pl-1 font-bold text-[#222]">
            #3
            <svg width="12" height="12" viewBox="0 0 12 12" className="mr-2 ml-auto">
              <rect x=".5" y=".5" width="11" height="11" rx="1" fill="#dd6a72" stroke="#d9606a" />
              <path d="M3.500 3.500l5 5M8.500 3.500l-5 5" stroke="#fff" strokeWidth="1.700" />
            </svg>
          </div>
          <div className="mt-[5px] pl-[2px] leading-4 tracking-[0.09px]">(pending—In the quiet period. Expires in 3 sec)</div>
        </div>
      </div>
      {[
        ['#2', 'Jan 30, 2019 5:04 PM', 'bg-white'],
        ['#1', 'Jan 30, 2019 4:49 PM', 'bg-[#fafafa]'],
      ].map(([n, when, bg]) => (
        <div key={n} className={`flex h-[33px] pt-[6px] pl-[7px] text-[12px] ${bg}`}>
          <Ball kind="blue" />
          <span className="ml-[5px] h-[13px] w-[14px] border-b border-black leading-[13px] font-bold text-black">{n}</span>
          <span className="ml-[46px] leading-[13px] tracking-[0.08px] text-[#6b6b6b]">{when}</span>
        </div>
      ))}
      <div className="mt-[7px] flex h-[38px] items-center bg-[#eee] pb-px pl-[103px] tracking-[0.05px] text-[#204a87]">
        <span className="mt-[3px]"><RssIcon /></span>
        <span className="mr-1 ml-1 border-b border-[#204a87] leading-[16px]">RSS for all</span>
        <span className="mt-[3px]"><RssIcon /></span>
        <span className="ml-1 border-b border-[#204a87] leading-[16px]">RSS for failures</span>
      </div>
    </div>
  );
}

/* ---------- page ---------- */

function SidePanel() {
  return (
    <div className="w-[358px] shrink-0 pt-3 pl-[17px]">
      {sideItems.map((it) => (
        <div key={it.label} className="flex h-8 items-center">
          <span className="flex w-[30px]">{it.icon}</span>
          <span className={`tracking-[0.07px] ${it.visited ? 'text-[#5c3566]' : 'text-[#204a87]'} ${it.bold ? 'font-bold' : ''}`}>{it.label}</span>
        </div>
      ))}
      <BuildHistory />
    </div>
  );
}

const permalinks = ['Last build (#2), 4 hr 3 min ago', 'Last stable build (#2), 4 hr 3 min ago', 'Last successful build (#2), 4 hr 3 min ago', 'Last completed build (#2), 4 hr 3 min ago'];

function MainPanel() {
  return (
    <div className="flex flex-1 justify-between">
      <div className="pl-[17px]">
        <h1 className="pt-[25px] text-[29px] leading-9 font-bold tracking-[-0.46px]">Project spe_assign1</h1>
        <div className="mt-[86px] ml-[18px]">
          <div className="flex h-[50px] items-center">
            <Folder size={46} />
            <span className="ml-[5px] border-b border-[#5c3566] leading-4 tracking-[0.1px] text-[#5c3566]">Workspace</span>
          </div>
          <div className="mt-[2px] flex h-[50px] items-center">
            <Notepad size={46} />
            <span className="ml-[5px] border-b border-[#5c3566] leading-4 tracking-[0.1px] text-[#5c3566]">Recent Changes</span>
          </div>
        </div>
        <h2 className="mt-[14px] text-[22px] leading-7 font-bold tracking-[-0.4px]">Permalinks</h2>
        <ul className="mt-[16px] ml-[25px]">
          {permalinks.map((p) => (
            <li key={p} className="mb-[3.700px] flex h-4 items-center">
              <span className="mr-[8px] ml-[1px] h-[6px] w-[6px] rounded-full bg-[#333]" />
              <span className="border-b border-[#204a87] leading-4 tracking-[0.14px] text-[#204a87]">{p}</span>
            </li>
          ))}
        </ul>
      </div>
      <div className="flex flex-col items-end pt-[74px] pr-[15px]">
        <div className="flex items-center text-[#204a87]">
          <span className="mt-0.5 flex"><NotepadSmall /></span>
          <span className="border-b border-[#204a87] leading-4 tracking-[0.12px]">add description</span>
        </div>
        <button className="mt-[6px] mr-[2px] h-8 w-[129px] border border-[#5788a1] bg-[#4b758b] text-[12px] font-bold text-[#eee]">Disable Project</button>
      </div>
    </div>
  );
}

function Footer() {
  return (
    <div className="flex h-11 items-start justify-end border-t border-[#d3d7cf] bg-[#f6faf2] pt-[14px] pr-[15px] text-[12px] leading-[13px]">
      <span className="tracking-[0.06px]">Page generated: Jan 30, 2019 9:08:49 PM IST</span>
      <span className="ml-[15px] border-b border-[#204a87] tracking-[0.02px] text-[#204a87]">REST API</span>
      <span className="ml-[15px] border-b border-[#204a87] tracking-[0.11px] text-[#204a87]">Jenkins ver. 2.150.2</span>
    </div>
  );
}

export default function App() {
  return (
    <div className="h-[1080px] w-[1920px] overflow-hidden bg-white font-['Noto_Sans',sans-serif]">
      <TopPanel />
      <div className="flex h-[1056px]">
        <Launcher />
        <div className="flex w-[1839px] flex-col">
          <TabStrip />
          <Toolbar />
          <div className="flex flex-1 flex-col font-['Liberation_Sans',sans-serif] text-[14px] leading-5 text-[#333]">
            <JenkinsHeader />
            <Breadcrumbs />
            <div className="flex flex-1">
              <SidePanel />
              <MainPanel />
            </div>
            <Footer />
          </div>
        </div>
      </div>
    </div>
  );
}
